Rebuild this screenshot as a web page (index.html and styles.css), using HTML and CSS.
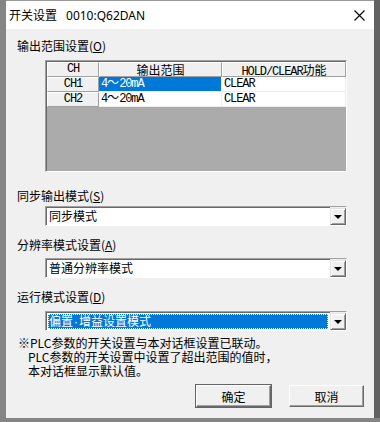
FILE: index.html
```html
<!DOCTYPE html>
<html lang="zh-CN">
<head>
<meta charset="utf-8">
<title>开关设置</title>
<link rel="stylesheet" href="styles.css">
</head>
<body>
<div class="window">
  <div class="titlebar">
    <span class="title">开关设置<span class="title-lat">0010:Q62DAN</span></span>
    <svg class="close" width="11" height="11" viewBox="0 0 11 11"><path d="M0.5 0.5 L10.5 10.5 M10.5 0.5 L0.5 10.5" stroke="#000" stroke-width="1.1" fill="none"/></svg>
  </div>
  <div class="body">
    <div class="label l1">输出范围设置(<u>O</u>)</div>
    <div class="grid-frame">
      <div class="grid">
        <div class="hd c0"><span class="m">CH</span></div>
        <div class="hd c1">输出范围</div>
        <div class="hd c2"><span class="m">HOLD/CLEAR</span>功能</div>
        <div class="rh c0"><span class="m">CH1</span></div>
        <div class="cell c1 sel"><span class="m">4</span>～<span class="m">20mA</span></div>
        <div class="cell c2"><span class="m">CLEAR</span></div>
        <div class="rh c0"><span class="m">CH2</span></div>
        <div class="cell c1"><span class="m">4</span>～<span class="m">20mA</span></div>
        <div class="cell c2"><span class="m">CLEAR</span></div>
      </div>
    </div>
    <div class="label l2">同步输出模式(<u>S</u>)</div>
    <div class="combo cb1"><div class="field"><span class="val">同步模式</span></div><div class="drop"><span class="tri"></span></div></div>
    <div class="label l3">分辨率模式设置(<u>A</u>)</div>
    <div class="combo cb2"><div class="field"><span class="val">普通分辨率模式</span></div><div class="drop"><span class="tri"></span></div></div>
    <div class="label l4">运行模式设置(<u>D</u>)</div>
    <div class="combo cb3"><div class="field"><span class="val hl">偏置<span class="dot">·</span>增益设置模式</span></div><div class="drop"><span class="tri"></span></div></div>
    <div class="notes">
      <p>※PLC参数的开关设置与本对话框设置已联动。</p>
      <p class="indent">PLC参数的开关设置中设置了超出范围的值时，</p>
      <p class="indent">本对话框显示默认值。</p>
    </div>
    <div class="buttons">
      <button class="btn default">确定</button>
      <button class="btn">取消</button>
    </div>
  </div>
</div>
</body>
</html>
```

FILE: styles.css
```css
* { box-sizing: border-box; }
html, body { margin: 0; padding: 0; }
body {
  width: 380px;
  height: 422px;
  overflow: hidden;
  background: #858585;
  font-family: "Noto Sans CJK SC", "Noto Sans", sans-serif;
  font-size: 12px;
  color: #000;
}
.window {
  margin-left: 6px;
  width: 368px;
  height: 418px;
  background: #f0f0f0;
  box-shadow: 6px 0 0 #626262;
}
.titlebar {
  height: 29px;
  background: #fff;
  border-top: 1px solid #9a9a9a;
  display: flex;
  align-items: center;
  justify-content: space-between;
  padding: 0 9px 0 3px;
}
.title { line-height: 16px; font-size: 12px; }
.title-lat { font-family: "Noto Sans", sans-serif; margin-left: 9px; }
.close { display: block; }
.body { padding-left: 11px; }
.label { line-height: 16px; height: 16px; }
.label u { text-underline-offset: 1px; }
.l1 { margin-top: 9px; }
.l2 { margin-top: 16px; }
.l3 { margin-top: 11px; }
.l4 { margin-top: 11px; }

.grid-frame {
  margin: 6px 0 0 28px;
  width: 302px;
  height: 112px;
  border-top: 1px solid #a0a0a0;
  border-left: 1px solid #a0a0a0;
  border-right: 1px solid #fff;
  border-bottom: 1px solid #fff;
  background: #ababab;
}
.grid {
  border-top: 1px solid #696969;
  border-left: 1px solid #696969;
  height: 100%;
  display: grid;
  grid-template-columns: 52px 123px 124px;
  grid-template-rows: 15px 15px 15px;
  align-content: start;
  font-family: "Liberation Mono", "Noto Sans CJK SC", monospace;
  font-size: 12px;
}
.grid > div { white-space: nowrap; }
.m { letter-spacing: -1.1px; font-family: "Liberation Mono", monospace; }
.hd, .rh {
  background: #f0f0f0;
  border-top: 1px solid #fff;
  border-left: 1px solid #fff;
  border-right: 1px solid #a0a0a0;
  border-bottom: 1px solid #a0a0a0;
  text-align: center;
  line-height: 13px;
}
.hd.c1, .hd.c2 { font-family: "Noto Sans CJK SC", sans-serif; }
.hd.c2 .m { font-family: "Liberation Mono", monospace; }
.cell {
  background: #fff;
  border-right: 1px solid #ececec;
  border-bottom: 1px solid #ececec;
  padding-left: 2px;
  line-height: 14px;
}
.cell.sel { background: #0078d7; color: #fff; }

.combo {
  margin-left: 28px;
  width: 302px;
  height: 20px;
  border-top: 1px solid #a0a0a0;
  border-left: 1px solid #a0a0a0;
  border-right: 1px solid #fff;
  border-bottom: 1px solid #fff;
  display: flex;
}
.cb1 { margin-top: 2px; }
.cb2 { margin-top: 5px; }
.cb3 { margin-top: 6px; }
.combo .field {
  flex: 1;
  background: #fff;
  border-top: 1px solid #696969;
  border-left: 1px solid #696969;
  padding: 1px 2px 1px 1px;
  display: flex;
}
.val { flex: 1; line-height: 14px; padding-left: 1px; white-space: nowrap; }
.val.hl { background: #0078d7; color: #fff; outline: 1px dotted #fff; outline-offset: -1px; }
.dot { font-family: "Liberation Sans", sans-serif; margin: 0 1px; }
.drop {
  width: 16px;
  height: 17px;
  background: #f0f0f0;
  border-top: 1px solid #e3e3e3;
  border-left: 1px solid #e3e3e3;
  border-right: 1px solid #696969;
  border-bottom: 1px solid #696969;
  box-shadow: inset 1px 1px 0 #fff, inset -1px -1px 0 #a0a0a0;
  display: flex;
  align-items: center;
  justify-content: center;
  margin-top: 1px;
}
.tri {
  width: 0;
  height: 0;
  border-left: 4px solid transparent;
  border-right: 4px solid transparent;
  border-top: 4px solid #000;
}

.notes { margin-top: 5px; margin-left: 1px; }
.notes p { margin: 0; line-height: 14px; height: 14px; white-space: nowrap; }
.notes .indent { padding-left: 10px; }

.buttons {
  margin-top: 7px;
  display: flex;
  justify-content: flex-end;
  gap: 18px;
  padding-right: 10px;
}
.btn {
  width: 75px;
  height: 22px;
  padding: 0;
  background: #f0f0f0;
  font-family: "Noto Sans CJK SC", sans-serif;
  font-size: 12px;
  color: #000;
  border-top: 1px solid #fff;
  border-left: 1px solid #fff;
  border-right: 1px solid #696969;
  border-bottom: 1px solid #696969;
  box-shadow: inset -1px -1px 0 #a0a0a0;
}
.btn.default {
  outline: 1px solid #646464;
  outline-offset: 0;
}
```
